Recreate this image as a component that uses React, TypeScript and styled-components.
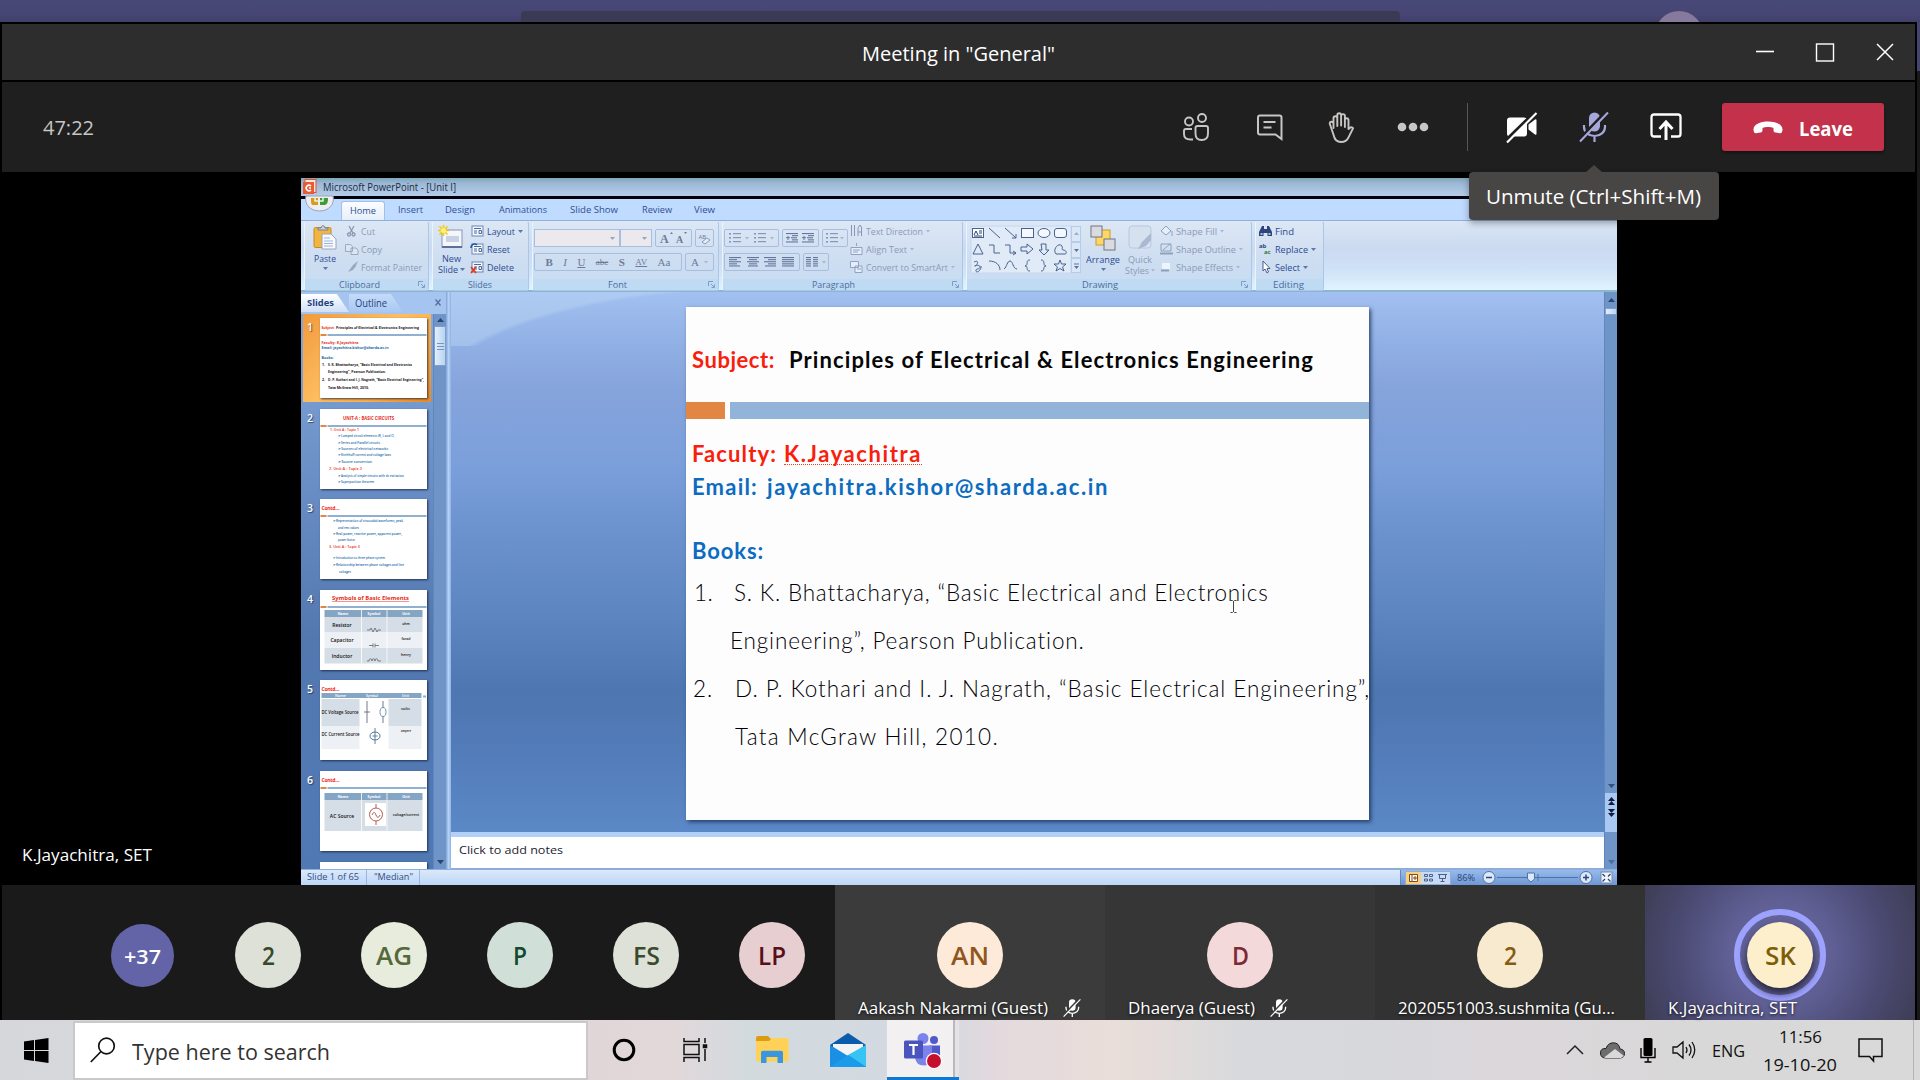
import React, { useLayoutEffect, useRef, useState } from "react";
import styled, { createGlobalStyle, css } from "styled-components";

const UI = `"Open Sans", "Noto Sans", sans-serif`;
const SLIDE = `Lato, "Open Sans", sans-serif`;

const Global = createGlobalStyle`
  * { box-sizing: border-box; }
  html, body { margin: 0; padding: 0; background: #000; overflow: hidden; }
  body { font-family: ${UI}; }
  svg { display: block; flex: none; overflow: visible; }
`;

/* ---------- text that keeps to a set width ---------- */

const FitBox = styled.span<{ $w: number; $ml?: number }>`
  display: block;
  flex: none;
  width: ${(p) => p.$w}px;
  margin-left: ${(p) => p.$ml || 0}px;
  white-space: nowrap;
`;
const FitInner = styled.span<{ $size: number; $color?: string; $weight?: number; $slide?: boolean; $shadow?: boolean }>`
  display: block;
  width: max-content;
  transform-origin: left center;
  white-space: pre;
  font-family: ${(p) => (p.$slide ? SLIDE : UI)};
  font-size: ${(p) => p.$size}px;
  font-weight: ${(p) => p.$weight || 400};
  color: ${(p) => p.$color || "inherit"};
  ${(p) => p.$shadow && css`text-shadow: 0 1px 3px rgba(0, 0, 0, 0.8);`}
`;

type FitProps = {
  w: number;
  size: number;
  color?: string;
  weight?: number;
  ml?: number;
  slide?: boolean;
  shadow?: boolean;
  children: string;
};

function Fit({ w, size, color, weight, ml, slide, shadow, children }: FitProps) {
  const ref = useRef<HTMLSpanElement>(null);
  const [style, setStyle] = useState<React.CSSProperties>({});
  useLayoutEffect(() => {
    const natural = ref.current!.getBoundingClientRect().width;
    setStyle(
      slide
        ? { letterSpacing: `${(w - natural) / children.length}px` }
        : { transform: `scaleX(${w / natural})` }
    );
  }, []);
  return (
    <FitBox $w={w} $ml={ml}>
      <FitInner ref={ref} $size={size} $color={color} $weight={weight} $slide={slide} $shadow={shadow} style={style}>
        {children}
      </FitInner>
    </FitBox>
  );
}

/* ---------- desktop and window frame ---------- */

const Desktop = styled.div`
  width: 1920px;
  height: 1080px;
  overflow: hidden;
  background: #1b1b1b;
  display: flex;
  flex-direction: column;
`;
const BackApp = styled.div`
  height: 22px;
  flex: none;
  display: flex;
  padding: 11px 0 0 521px;
  overflow: hidden;
  background: linear-gradient(#484878 0, #464573 70%, #3f3f68 100%);
`;
const BackSearch = styled.div`
  width: 879px;
  height: 30px;
  border-radius: 4px;
  background: #3a3a55;
`;
const BackAvatar = styled.div`
  width: 48px;
  height: 48px;
  margin-left: 255px;
  border-radius: 50%;
  background: #85799c;
`;
const Middle = styled.div`
  display: flex;
  height: 998px;
  flex: none;
`;
const MeetingWindow = styled.div`
  width: 1917px;
  height: 998px;
  padding: 2px 2px 0;
  background: #000;
  display: flex;
  flex-direction: column;
`;
const Edge = styled.div`
  width: 3px;
  background: linear-gradient(#444470 0 49px, #191919 49px);
`;
const TitleBar = styled.div`
  height: 56px;
  flex: none;
  background: #2d2d2d;
  display: flex;
  align-items: center;
  padding-left: 860px;
  line-height: 56px;
  & > span { padding-top: 3px; }
`;
const WindowButtons = styled.div`
  display: flex;
  align-items: center;
  gap: 42px;
  margin-left: 701px;
`;
const Toolbar = styled.div`
  height: 90px;
  flex: none;
  margin-top: 2px;
  background: #1f1f1f;
  display: flex;
  align-items: center;
  padding-left: 41px;
  line-height: 40px;
  & > span { padding-top: 2px; }
`;
const ToolIcons = styled.div`
  display: flex;
  align-items: center;
  margin-left: 1086px;
`;
const ToolButton = styled.div<{ $w: number }>`
  width: ${(p) => p.$w}px;
  height: 48px;
  flex: none;
  display: flex;
  align-items: center;
  justify-content: center;
  position: relative;
`;
const Divider = styled.div`
  width: 1px;
  height: 48px;
  margin: 0 38px 0 -5px;
  background: #555;
`;
const Leave = styled.div`
  width: 162px;
  height: 48px;
  margin-left: 40px;
  border-radius: 3px;
  background: #c4314b;
  color: #fff;
  display: flex;
  align-items: center;
  padding-left: 31px;
  box-shadow: 0 2px 3px rgba(0, 0, 0, 0.4);
  & > span { padding-top: 3px; }
`;
const Tooltip = styled.div`
  position: absolute;
  z-index: 5;
  left: -69px;
  top: 69px;
  width: 250px;
  height: 48px;
  padding-left: 17px;
  border-radius: 4px;
  background: #484644;
  color: #fff;
  line-height: 49px;
  box-shadow: 0 3px 7px rgba(0, 0, 0, 0.35);
  &::before {
    content: "";
    position: absolute;
    left: 117px;
    top: -7px;
    border: 8px solid transparent;
    border-top: 0;
    border-bottom: 7px solid #484644;
  }
`;
const Stage = styled.div`
  height: 713px;
  flex: none;
  display: flex;
  background: #000;
`;
const PresenterArea = styled.div`
  width: 299px;
  display: flex;
  align-items: flex-end;
  padding: 0 0 15px 20px;
  color: #fff;
  line-height: 30px;
`;

/* ---------- shared PowerPoint window ---------- */

const Ppt = styled.div`
  width: 1316px;
  height: 713px;
  padding-top: 6px;
  display: flex;
  flex-direction: column;
`;
const PptTitle = styled.div`
  height: 18px;
  flex: none;
  display: flex;
  align-items: center;
  gap: 5px;
  padding-left: 1px;
  line-height: 17px;
  background: linear-gradient(#7fa6bb 0, #9db9d5 30%, #b5cdea 100%);
`;
const TabsRow = styled.div`
  height: 24px;
  flex: none;
  display: flex;
  border-top: 3px solid #00000c;
  background: #bfdbff;
  color: #2d4f94;
  line-height: 22px;
`;
const OfficeOrb = styled.div`
  width: 40px;
  padding-left: 3px;
  margin-top: -3px;
`;
const Tab = styled.div<{ $w: number; $active?: boolean }>`
  width: ${(p) => p.$w}px;
  display: flex;
  justify-content: center;
  ${(p) =>
    p.$active &&
    css`
      margin-top: 2px;
      line-height: 17px;
      border: 1px solid #9fc0e8;
      border-bottom: 0;
      border-radius: 3px 3px 0 0;
      background: linear-gradient(#fbfdff, #e6effa);
    `}
`;
const Ribbon = styled.div`
  height: 72px;
  flex: none;
  display: flex;
  padding: 0 3px;
  gap: 3px;
  border-top: 1px solid #93afd8;
  border-bottom: 2px solid #8db5d0;
  background: linear-gradient(#dbe7f6 0, #cbdaf0 40%, #cfe2f7 70%, #e0f3ff 100%);
`;
const Group = styled.div<{ $w: number }>`
  width: ${(p) => p.$w}px;
  height: 70px;
  flex: none;
  display: flex;
  flex-direction: column;
  border: 1px solid #aac7e8;
  border-top-color: #dbe8f6;
  border-left-color: #eaf4fd;
  border-radius: 3px;
  background: linear-gradient(#dce7f5 0, #cfdef1 50%, #c8dcf2 100%);
`;
const GroupBody = styled.div`
  height: 57px;
  flex: none;
  display: flex;
`;
const GroupLabel = styled.div<{ $pl: number }>`
  height: 11px;
  display: flex;
  align-items: center;
  padding-left: ${(p) => p.$pl}px;
  background: #bfdaf3;
  color: #4d6b9f;
  line-height: 12px;
`;
const LauncherSlot = styled.div`
  flex: 1;
  display: flex;
  justify-content: flex-end;
  padding-right: 3px;
`;
const BigButton = styled.div<{ $w: number; $ml?: number; $color?: string }>`
  width: ${(p) => p.$w}px;
  margin-left: ${(p) => p.$ml || 0}px;
  flex: none;
  display: flex;
  flex-direction: column;
  align-items: center;
  padding-top: 3px;
  color: ${(p) => p.$color || "#2d4a91"};
  line-height: 11px;
  & > svg:first-child { margin-bottom: 3px; }
`;
const CaretDrop = styled.div`
  padding-top: 3px;
`;
const Stack = styled.div<{ $ml?: number }>`
  margin-left: ${(p) => p.$ml || 0}px;
  display: flex;
  flex-direction: column;
`;
const SmallRow = styled.div<{ $dim?: boolean }>`
  height: 18px;
  display: flex;
  align-items: center;
  gap: 3px;
  color: ${(p) => (p.$dim ? "#8c9ab4" : "#2d4a91")};
  line-height: 19px;
`;
const IconSlot = styled.span`
  width: 13px;
  display: flex;
  justify-content: flex-start;
`;
const Line = styled.div`
  display: flex;
  align-items: center;
  gap: 2px;
`;
const Fields = styled.div`
  display: flex;
`;
const ToolRow = styled.div`
  height: 18px;
  display: flex;
  gap: 3px;
  margin-top: 7px;
  & + & { margin-top: 6px; }
`;
const Cluster = styled.div<{ $w: number; $field?: boolean }>`
  width: ${(p) => p.$w}px;
  height: 18px;
  flex: none;
  display: flex;
  align-items: center;
  justify-content: ${(p) => (p.$field ? "flex-end" : "space-evenly")};
  padding-right: ${(p) => (p.$field ? 4 : 0)}px;
  border: 1px solid #a6bfe0;
  border-radius: ${(p) => (p.$field ? 0 : 2)}px;
  background: ${(p) => (p.$field ? "#ece9ee" : "transparent")};
  color: #6c7b98;
`;
const Glyph = styled.span<{ $size: number; $kind?: string }>`
  font-family: "Liberation Serif", serif;
  font-size: ${(p) => p.$size}px;
  line-height: 14px;
  font-weight: ${(p) => (p.$kind === "bold" ? 700 : 400)};
  font-style: ${(p) => (p.$kind === "italic" ? "italic" : "normal")};
  text-decoration: ${(p) => (p.$kind === "under" ? "underline" : p.$kind === "strike" ? "line-through" : "none")};
`;
const GalleryPad = styled.div`
  padding-top: 4px;
`;
const PptBody = styled.div`
  flex: 1;
  min-height: 0;
  display: flex;
  background: #5d86bf;
`;
const SidePane = styled.div`
  width: 145px;
  display: flex;
  flex-direction: column;
  overflow: hidden;
  background: linear-gradient(#86aee4 0, #7399cf 20%, #5378b0 60%, #5079b4 100%);
`;
const PaneTabs = styled.div`
  height: 22px;
  flex: none;
  padding-top: 2px;
  display: flex;
  background: #a5c4f0;
`;
const PaneTab = styled.div<{ $w: number; $active?: boolean }>`
  width: ${(p) => p.$w}px;
  height: 18px;
  padding-left: 6px;
  line-height: 18px;
  color: #26427e;
  background: ${(p) => (p.$active ? "linear-gradient(#fff, #cfe0f7)" : "linear-gradient(#c5dbf8, #a9c8f2)")};
  clip-path: polygon(0 0, calc(100% - 12px) 0, 100% 100%, 0 100%);
`;
const PaneClose = styled.div`
  margin-left: auto;
  padding: 5px 5px 0 0;
`;
const PaneContent = styled.div`
  display: flex;
  flex: 1;
  min-height: 0;
`;
const ThumbList = styled.div`
  width: 132px;
  overflow: hidden;
  display: flex;
  flex-direction: column;
  gap: 2.6px;
  padding-left: 2px;
`;
const ThumbRow = styled.div<{ $selected?: boolean }>`
  width: 128px;
  height: 88px;
  flex: none;
  display: flex;
  padding: 4px 0 0 4px;
  color: #fff;
  background: ${(p) => (p.$selected ? "linear-gradient(135deg, #f19a3c 0, #fdbd60 45%, #fbb04c 70%, #ec8a22 100%)" : "transparent")};
`;
const ThumbNumber = styled.div`
  width: 13px;
  flex: none;
  font-size: 10.5px;
  font-weight: 600;
  line-height: 18px;
  text-shadow: 1px 1px 1px rgba(40, 40, 60, 0.7);
`;
const Thumb = styled.div`
  width: 107px;
  height: 80px;
  background: #fff;
  box-shadow: 1px 1px 2px rgba(20, 30, 60, 0.8);
`;
const Scrollbar = styled.div<{ $w: number }>`
  width: ${(p) => p.$w}px;
  flex: none;
  display: flex;
  flex-direction: column;
  align-items: center;
  background: #6f95c8;
  border-left: 1px solid #5f86bd;
`;
const ScrollThumb = styled.div<{ $h: number }>`
  width: 100%;
  height: ${(p) => p.$h}px;
  display: flex;
  flex-direction: column;
  align-items: center;
  justify-content: center;
  gap: 2px;
  border: 1px solid #7f9fca;
  background: linear-gradient(90deg, #e2effc, #b9d3f1);
`;
const Grip = styled.i`
  display: block;
  width: 7px;
  height: 1px;
  background: #7894bd;
`;
const ScrollEnd = styled.div<{ $h: number }>`
  height: ${(p) => p.$h}px;
  width: 100%;
  display: flex;
  align-items: center;
  justify-content: center;
`;
const PageJump = styled.div`
  width: 100%;
  height: 39px;
  display: flex;
  flex-direction: column;
  align-items: center;
  justify-content: flex-start;
  padding-top: 4px;
  gap: 4px;
  background: #a9c8f3;
`;
const Spacer = styled.div`
  flex: 1;
`;
const Splitter = styled.div`
  width: 5px;
  background: linear-gradient(90deg, #7fa3d6, #b5d2f6 50%, #8fb3e6);
`;
const Work = styled.div`
  flex: 1;
  display: flex;
  flex-direction: column;
`;
const WorkTop = styled.div`
  display: flex;
  height: 540px;
`;
const Canvas = styled.div`
  height: 540px;
  display: flex;
  background:
    radial-gradient(ellipse 330px 120px at 300px 115px, transparent 97%, rgba(190, 217, 245, 0.42) 100%) 0 0 / 228px 54px no-repeat,
    linear-gradient(#a2c0f0 0, #90afe4 10%, #86a4dc 18%, #7b9fda 32%, #6b92cd 45%, #5d85bf 60%, #4e77b1 74%, #5079b5 80%, #5b88c6 100%);
`;
const SlidePage = styled.div`
  width: 683px;
  height: 513px;
  margin: 15px 235px 0 235px;
  flex: none;
  padding-top: 36.5px;
  background: #fdfdfe;
  box-shadow: 2px 2px 4px rgba(20, 40, 80, 0.75);
  overflow: hidden;
`;
const SlideLine = styled.div<{ $top?: number; $h?: number; $pl: number }>`
  display: flex;
  height: ${(p) => p.$h || 32}px;
  line-height: ${(p) => p.$h || 32}px;
  margin-top: ${(p) => p.$top || 0}px;
  padding-left: ${(p) => p.$pl}px;
`;
const Bars = styled.div`
  display: flex;
  gap: 5px;
  height: 17px;
  margin-top: 26.5px;
`;
const OrangeBar = styled.div`
  width: 39px;
  background: #e28743;
`;
const BlueBar = styled.div`
  flex: 1;
  background: #92b4d8;
`;
const Misspelt = styled.span`
  height: 27px;
  margin-left: 7px;
  border-bottom: 1px dotted #e8452f;
`;
const CursorAnchor = styled.div`
  position: relative;
  display: flex;
`;
const CursorPlace = styled.div`
  position: absolute;
  left: 517px;
  top: 31px;
`;
const NotesRow = styled.div`
  display: flex;
  height: 37px;
`;
const Notes = styled.div`
  height: 37px;
  flex: 1;
  display: flex;
  padding-left: 8px;
  border-top: 5px solid #b2d0f8;
  border-bottom: 1px solid #8fabd3;
  background: #fff;
  line-height: 26px;
  color: #1d2430;
`;
const Status = styled.div`
  height: 16px;
  flex: none;
  display: flex;
  line-height: 14px;
  color: #33507f;
  border-top: 1px solid #8eaede;
  background: linear-gradient(#dbe9fb, #bdd6f7);
`;
const StatusCell = styled.div<{ $w: number; $pl: number }>`
  width: ${(p) => p.$w}px;
  padding-left: ${(p) => p.$pl}px;
  border-right: 1px solid #97b6e2;
`;
const ViewTools = styled.div`
  width: 217px;
  margin-left: auto;
  display: flex;
  align-items: center;
  background: linear-gradient(#98bbed, #6f97d2);
  border-left: 1px solid #6186c0;
`;
const ViewButtons = styled.div`
  width: 46px;
  height: 14px;
  margin-left: 4px;
  display: flex;
  background: #c7dbf6;
  border: 1px solid #90aedb;
`;
const ViewButton = styled.div<{ $on?: boolean }>`
  flex: 1;
  display: flex;
  align-items: center;
  justify-content: center;
  background: ${(p) => (p.$on ? "#fcd07a" : "transparent")};
`;

/* ---------- participants ---------- */

const Participants = styled.div`
  height: 135px;
  flex: none;
  display: flex;
  background: #1b1a1a;
`;
const Overflow = styled.div`
  width: 833px;
  display: flex;
  align-items: center;
  gap: 60px;
  padding: 5px 0 0 107px;
`;
const Avatar = styled.div<{ $bg: string; $fg: string; $small?: boolean }>`
  width: ${(p) => (p.$small ? 63 : 66)}px;
  height: ${(p) => (p.$small ? 63 : 66)}px;
  margin: 0 ${(p) => (p.$small ? 1.5 : 0)}px;
  padding-top: ${(p) => (p.$small ? 3 : 0)}px;
  flex: none;
  border-radius: 50%;
  background: ${(p) => p.$bg};
  color: ${(p) => p.$fg};
  display: flex;
  align-items: center;
  justify-content: center;
`;
const Tile = styled.div<{ $bg: string }>`
  width: 270px;
  height: 135px;
  padding-top: 24px;
  background: ${(p) => p.$bg};
  display: flex;
  flex-direction: column;
  align-items: center;
`;
const Ring = styled.div<{ $on?: boolean }>`
  width: 92px;
  height: 92px;
  border-radius: 50%;
  flex: none;
  display: flex;
  align-items: center;
  justify-content: center;
  border: 6px solid ${(p) => (p.$on ? "#9ea2ff" : "transparent")};
  ${(p) => p.$on && css`
    ${Avatar} { box-shadow: 0 5px 8px #26243a; }
  `}
`;
const NameRow = styled.div`
  width: 270px;
  height: 19px;
  display: flex;
  align-items: center;
  padding-left: 23px;
  gap: 15px;
  margin-top: -3px;
  color: #fff;
  line-height: 19px;
  position: relative;
`;

/* ---------- taskbar ---------- */

const Taskbar = styled.div`
  height: 60px;
  flex: none;
  display: flex;
  align-items: center;
  color: #111;
  background: linear-gradient(90deg, #d6d7db 0, #d9dadd 20%, #e1d6d8 32%, #e2d8da 35%, #d2dade 39%, #d4d9e1 49%, #e4d9dd 52%, #e9ded9 58%, #d7d9dd 65%, #d8d8dc 74%, #dcd7db 78%, #d8d8d8 90%, #d9d9d9 100%);
`;
const StartButton = styled.div`
  width: 73px;
  padding-left: 24px;
`;
const SearchBox = styled.div`
  width: 515px;
  height: 59px;
  border: 2px solid #c9c9c9;
  background: #fff;
  display: flex;
  align-items: center;
  padding-left: 15px;
  color: #333;
  line-height: 50px;
  & > span { padding-top: 3px; }
`;
const AppSlot = styled.div<{ $w: number }>`
  width: ${(p) => p.$w}px;
  height: 60px;
  flex: none;
  display: flex;
  align-items: center;
  justify-content: center;
`;
const ActiveApp = styled.div`
  width: 72px;
  height: 60px;
  margin-left: 4px;
  padding-top: 6px;
  display: flex;
  align-items: center;
  justify-content: center;
  border-bottom: 3px solid #0f78d4;
  background: linear-gradient(90deg, #f2f0f1 0 66px, #b9b9bd 66px 68px, #e6e2e4 68px);
`;
const Tray = styled.div`
  margin-left: auto;
  display: flex;
  align-items: center;
  height: 60px;
  padding-right: 6px;
`;
const TrayPad = styled.span<{ $w: number }>`
  width: ${(p) => p.$w}px;
`;
const Clock = styled.div`
  width: 80px;
  margin-left: 15px;
  padding-top: 1px;
  display: flex;
  flex-direction: column;
  align-items: center;
  line-height: 28px;
`;
const DesktopPeek = styled.div`
  width: 1px;
  height: 60px;
  margin-left: 30px;
  background: #b5b5b5;
`;

/* ---------- drawings ---------- */

const Arrow = ({ c = "#5e76a8", w = 5 }: { c?: string; w?: number }) => (
  <svg width={w} height={w * 0.6} viewBox="0 0 5 3"><path d="M0 0h5L2.500 3z" fill={c} /></svg>
);
const Faint = () => <Arrow c="#a9b6cb" w={4} />;
const ArrowUp = () => (
  <svg width="7" height="4" viewBox="0 0 7 4"><path d="M0 4h7L3.500 0z" fill="#28456f" /></svg>
);
const Launcher = () => (
  <svg width="7" height="7" viewBox="0 0 7 7" fill="none" stroke="#7f9cc6" strokeWidth="1">
    <path d="M.5 5V.5H5M3 3l3 3M6.500 3.500v3h-3" />
  </svg>
);

const MicOff = ({ size = 30, c = "#a6a7dc", bg = "#1f1f1f" }) => (
  <svg width={size} height={size} viewBox="0 0 30 30" fill="none">
    <rect x="10" y="0.500" width="11" height="19" rx="5.500" fill={c} />
    <path d="M5 13v2c0 5 4.500 9 10.500 9S26 20 26 15v-2M15.500 24v6" stroke={c} strokeWidth="2.200" />
    <path d="M-1 28.500L27.500 -1" stroke={bg} strokeWidth="2.600" />
    <path d="M1 29.500L29 .5" stroke={c} strokeWidth="2" />
  </svg>
);

const LinesIcon = ({ kind }: { kind: string }) => {
  const rows: Record<string, number[][]> = {
    left: [[0, 12], [0, 8], [0, 12], [0, 8], [0, 11]],
    center: [[0, 12], [2, 8], [0, 12], [2, 8], [1, 10]],
    right: [[0, 12], [4, 8], [0, 12], [4, 8], [1, 11]],
    full: [[0, 12], [0, 12], [0, 12], [0, 12], [0, 12]],
    indent: [[0, 12], [6, 6], [5, 6], [6, 6], [0, 12]],
    columns: [[0, 5], [0, 5], [0, 5], [0, 5], [0, 5]],
  };
  return (
    <svg width="13" height="10" viewBox="0 0 13 10">
      {rows[kind].map(([x, w], i) => <rect key={i} x={x} y={i * 2.1} width={w} height="1.1" fill="#64779b" />)}
      {kind === "columns" && rows[kind].map((_, i) => <rect key={i} x={7} y={i * 2.1} width={5} height="1.1" fill="#64779b" />)}
      {kind === "indent" && <path d="M0 4.700h4M2 3v4" stroke="#64779b" />}
    </svg>
  );
};
const ListIcon = () => (
  <svg width="12" height="12" viewBox="0 0 12 12" fill="#8797b4">
    {[1, 5, 9].map((y) => <g key={y}><rect x="0" y={y} width="2" height="1.600" /><rect x="4" y={y} width="8" height="1.200" /></g>)}
  </svg>
);
const GrowA = ({ s, up }: { s: number; up: boolean }) => (
  <svg width={s} height="14" viewBox={`0 0 ${s} 14`}>
    <text x="0" y="12" fontSize={s - 1} fontFamily="Liberation Serif, serif" fontWeight="700" fill="#6c7b98">A</text>
    <path d={up ? `M${s - 3} 3l1.500-2 1.500 2z` : `M${s - 3} 1l1.500 2 1.500-2z`} fill="#6c7b98" />
  </svg>
);
const ClearFormat = () => (
  <svg width="13" height="13" viewBox="0 0 13 13">
    <text x="0.500" y="7" fontSize="6" fill="#6c7b98">AB</text>
    <path d="M4 10l5-4 3 2-5 4z" fill="#e6eef9" stroke="#8a9ab8" />
  </svg>
);

const ShapeGallery = () => (
  <svg width="110" height="48" viewBox="0 0 110 48" fill="none" stroke="#47628f" strokeWidth="1">
    <rect x="0" y="0" width="100" height="47" fill="#e1ebf8" stroke="#c5d7ef" />
    <rect x="1.500" y="2.500" width="11" height="9" fill="#fff" /><path d="M3 9l2-4 2 4M8 5h3M8 7h3M3 10h8" stroke="#26406f" />
    <path d="M18 2l11 10M34 2l11 10M45 8v4h-4" />
    <rect x="50.500" y="2.500" width="12" height="9" fill="#f4f9ff" /><ellipse cx="73" cy="7" rx="6" ry="4.500" fill="#f4f9ff" /><rect x="83.500" y="2.500" width="12" height="9" rx="2.500" fill="#f4f9ff" />
    <path d="M2 28l5-10 5 10zM18 19h5v8h6M34 19h5v8h6M42 25l3 2-3 2M50 21h6v-3l6 5-6 5v-3h-6zM70 18h5v6h3l-5 5-5-5h3zM85 28c-4-5 3-12 6-8 1 2-1 3 1 4 4 0 4 4 2 4z" />
    <path d="M3 36c6-3 3 4 1 4s5-2 5 1-5 1-4 4 6-2 5-5M18 35c7 0 11 4 11 9M33 43c3-2 3-8 6-8s3 8 7 8M59 34c-5 0-1 5-5 6 4 0 0 5 5 5M70 34c5 0 1 5 5 6-4 0 0 5-5 5M89 34l1.500 4h4.500l-3.500 3 1.500 4-4-2.500-4 2.500 1.500-4-3.500-3h4.500z" />
    <g stroke="#b6cceb" fill="#dbe7f6"><rect x="100.500" y="0.500" width="9" height="15" /><rect x="100.500" y="16.500" width="9" height="15" /><rect x="100.500" y="32.500" width="9" height="14" /></g>
    <g stroke="none" fill="#5a75a5"><path d="M103 9h5l-2.500-3z" opacity=".5" /><path d="M103 23h5l-2.500 3zM103 40h5l-2.500 3zM103 37.500h5v1h-5z" /></g>
  </svg>
);

const CutIcon = () => <svg width="14" height="12" viewBox="0 0 14 12" fill="none" stroke="#8b98b0" strokeWidth="1.300"><path d="M4 1l4 7M9 1L5 8" /><circle cx="4" cy="9.500" r="1.500" /><circle cx="8.500" cy="9.500" r="1.500" /></svg>;
const CopyIcon = () => <svg width="14" height="12" viewBox="0 0 14 12" fill="#dce5f1" stroke="#9aa9c2"><path d="M.5 1.500h5l2 2v5h-7zM6 5h5l2 2v4.500H6z" /></svg>;
const BrushIcon = () => <svg width="14" height="12" viewBox="0 0 14 12"><path d="M13 0L8 4l2 3zM8 4L3 11l5-2 2-3z" fill="#9aa7bd" /></svg>;
const LayoutIcon = ({ badge }: { badge?: string }) => (
  <svg width="13" height="12" viewBox="0 0 13 12">
    <rect x="1" y="1" width="11" height="10" fill="#f3f7fd" stroke="#6d85b3" />
    <path d="M3 3.500h7M3 6h3M3 8h3M8 5.500h2.500v3H8z" stroke="#4d6a9e" fill="none" />
    {badge === "reset" && <path d="M0 5c0-4 4-5 6-3" stroke="#2456a8" strokeWidth="1.600" fill="none" />}
    {badge === "delete" && <path d="M0 6l5 6M5 6l-5 6" stroke="#e03a1c" strokeWidth="1.800" />}
  </svg>
);

const PasteIcon = () => (
  <svg width="24" height="25" viewBox="0 0 24 25">
    <rect x="1" y="2.500" width="17" height="20" rx="1.500" fill="#f0b63f" stroke="#c48a29" />
    <path d="M5 5V3h3c0-3 4-3 4 0h3v2z" fill="#c9cfd8" stroke="#7b818c" />
    <path d="M9 9h9l5 5v10H9z" fill="#f7f9fd" stroke="#98a6bf" />
    <path d="M11 13h6M11 16h9M11 18.500h9M11 21h9" stroke="#9db4dc" />
  </svg>
);
const NewSlideIcon = () => (
  <svg width="26" height="25" viewBox="0 0 26 25">
    <rect x="4" y="5" width="20" height="17" fill="#f4f6fb" stroke="#8195b7" />
    <rect x="8" y="11" width="13" height="6" fill="#c7d2e4" /><path d="M4 22h20" stroke="#5d7196" strokeWidth="2" />
    <path d="M5.500 0v11M0 5.500h11M1.500 1.500l8 8M9.500 1.500l-8 8" stroke="#f5c800" strokeWidth="1.500" /><circle cx="5.500" cy="5.500" r="2.500" fill="#fff27a" />
  </svg>
);
const ArrangeIcon = () => (
  <svg width="27" height="26" viewBox="0 0 27 26">
    <rect x="6" y="5" width="14" height="15" fill="#ffd767" stroke="#c99a29" />
    <rect x="1" y="1" width="11" height="11" fill="#d9dbe0" stroke="#6e747f" /><rect x="14" y="14" width="11" height="11" fill="#d9dbe0" stroke="#6e747f" />
  </svg>
);
const QuickIcon = () => (
  <svg width="24" height="26" viewBox="0 0 24 26">
    <rect x="1" y="1" width="22" height="22" rx="3" fill="#d6e1f0" stroke="#b7c8df" /><path d="M23 8l-9 9-4 7 8-3 5-6z" fill="#aab9d0" />
  </svg>
);

function MiniBars() {
  return (
    <>
      <rect x="0.500" y="16" width="6" height="2" fill="#e28743" />
      <rect x="7.500" y="16" width="99" height="2" fill="#8fb0cf" />
    </>
  );
}
function MiniTitle({ title }: { title: string }) {
  return <text x="1.500" y="11" fontSize="5" fontWeight="700" fill="#ee2c1c" textLength="18">{title}</text>;
}
function MiniTable({ y, rows, h }: { y: number; rows: string[][]; h: number }) {
  return (
    <>
      <rect x="4.500" y={y} width="98" height="7" fill="#84a6c4" />
      <g fontSize="3.500" fontWeight="700" fill="#fff" textAnchor="middle">
        <text x="23" y={y + 4.5}>Name</text><text x="54" y={y + 4.5}>Symbol</text><text x="86" y={y + 4.5}>Unit</text>
      </g>
      {rows.map((r, i) => (
        <g key={i} fontSize="5" fontWeight="600" fill="#111" textAnchor="middle">
          <rect x="4.500" y={y + 7 + i * h} width="98" height={h} fill={i % 2 ? "#edf0f4" : "#d5dde6"} />
          <text x="22" y={y + 9 + i * h + h / 2}>{r[0]}</text>
          <text x="86" y={y + 7 + i * h + h / 2} fontSize="3.500">{r[1]}</text>
        </g>
      ))}
      <path d={`M41.500 ${y}v${7 + h * rows.length}M67 ${y}v${7 + h * rows.length}`} stroke="#fff" strokeWidth=".8" />
    </>
  );
}
const bullets = (items: [number, number, number, string, string][], size = 4, weight = 600) =>
  items.map(([x, y, w, c, t], i) => (
    <text key={i} x={x} y={y} fontSize={size} fontWeight={weight} fill={c} textLength={w} lengthAdjust="spacingAndGlyphs">{t}</text>
  ));
const B = "#1668a8";
const R = "#e62c20";
const K = "#151515";

const thumbs = [
  <>
    {bullets([[1.500, 11, 13, R, "Subject:"], [16, 11, 83, K, "Principles of Electrical & Electronics Engineering"], [1.500, 26, 37, R, "Faculty: K.Jayachitra"], [1.500, 31, 67, B, "Email: jayachitra.kishor@sharda.ac.in"], [1.500, 41, 12, B, "Books:"], [2, 47.500, 3, K, "1."], [8, 47.500, 84, K, "S. K. Bhattacharya, “Basic Electrical and Electronics"], [8, 55, 58, K, "Engineering”, Pearson Publication."], [2, 63, 3, K, "2."], [8, 63, 96, K, "D. P. Kothari and I. J. Nagrath, “Basic Electrical Engineering”,"], [8, 71, 41, K, "Tata McGraw Hill, 2010."]], 4.2, 700)}
    <MiniBars />
  </>,
  <>
    <text x="23" y="10.500" fontSize="5" fontWeight="700" fill={R} textLength="51" lengthAdjust="spacingAndGlyphs">UNIT-A : BASIC CIRCUITS</text>
    <MiniBars />
    {bullets([[10, 22, 29, R, "1.  Unit A : Topic 1"], [18, 28, 56, B, "➢ Lumped circuit elements (R, L and C)"], [18, 34.500, 42, B, "➢ Series and Parallel circuits"], [18, 41, 50, B, "➢ Sources of electrical networks"], [18, 47, 53, B, "➢ Kirchhoff current and voltage laws"], [18, 54, 34, B, "➢ Source conversion"], [9, 61, 33, R, "2.  Unit A : Topic 2"], [18, 67.500, 66, B, "➢ Analysis of simple circuits with dc excitation"], [18, 74, 36, B, "➢ Superposition theorem"]])}
  </>,
  <>
    <MiniTitle title="Contd…" />
    <MiniBars />
    {bullets([[13, 23, 70, B, "➢ Representation of sinusoidal waveforms, peak"], [18, 30, 21, B, "and rms values"], [13, 36, 69, B, "➢ Real power, reactive power, apparent power,"], [18, 42, 17, B, "power factor"], [9, 49, 31, R, "3.  Unit A : Topic 3"], [13, 60, 52, B, "➢ Introduction to three phase system"], [13, 67, 71, B, "➢ Relationship between phase voltages and line"], [19, 74, 12, B, "voltages"]])}
  </>,
  <>
    <text x="12" y="10" fontSize="5" fontWeight="700" fill={R} textDecoration="underline" textLength="77" lengthAdjust="spacingAndGlyphs">Symbols of Basic Elements</text>
    <MiniBars />
    <MiniTable y={20} h={15.5} rows={[["Resistor", "ohm"], ["Capacitor", "farad"], ["Inductor", "henry"]]} />
    <path d="M47 40h3l1-2 2 4 2-4 2 4 1-2h3M49 55.500h4M53 53.500v4M55 53.500v4M55 55.500h4M47 71h2c0-3 3-3 3 0 0-3 3-3 3 0 0-3 3-3 3 0h3" stroke="#555" strokeWidth=".7" fill="none" />
  </>,
  <>
    <MiniTitle title="Contd…" />
    <rect x="1.500" y="13" width="100" height="5" fill="#84a6c4" /><rect x="1.500" y="19" width="100" height="27" fill="#d5dde6" /><rect x="1.500" y="46" width="100" height="23" fill="#edf0f4" />
    <rect x="39.500" y="18" width="29" height="54" fill="#fff" />
    {bullets([[15, 17, 11, "#fff", "Name"], [46, 17, 12, "#fff", "Symbol"], [82, 17, 7, "#fff", "Unit"], [81, 30, 9, K, "volts"], [81, 52, 10, K, "ampere"]])}
    {bullets([[1.500, 34, 37, K, "DC Voltage Source"], [1.500, 56, 38, K, "DC Current Source"]], 5.2)}
    <path d="M47 21v22M44 32h6M63 21v22M55 48v16M52.500 56h5" stroke="#557" strokeWidth=".8" /><ellipse cx="63" cy="32" rx="3" ry="4.500" stroke="#57809a" fill="#fff" strokeWidth=".8" /><ellipse cx="55" cy="56" rx="5" ry="4" stroke="#3f7d9e" fill="none" />
    <rect x="103" y="15.500" width="3" height="2" fill="#8fb0cf" />
  </>,
  <>
    <MiniTitle title="Contd…" />
    <MiniBars />
    <MiniTable y={22} h={31} rows={[["AC Source", "voltage/current"]]} />
    <rect x="45" y="32" width="21" height="23" fill="#fff" /><circle cx="56" cy="43.500" r="6.500" fill="none" stroke="#b35a50" /><path d="M56 33v4M56 50v4M52 44c2-4 3-3 4 0s3 3 4 0" stroke="#b35a50" fill="none" />
  </>,
  <g />,
];

const CursorMark = () => (
  <CursorPlace><svg width="7" height="13" viewBox="0 0 7 13" fill="none" stroke="#444"><path d="M.5.5h2l1 1 1-1h2M3.500 1v11M.5 12.500h2l1-1 1 1h2" /></svg></CursorPlace>
);

/* ---------- sections ---------- */

const tabs: [string, number, number][] = [
  ["Insert", 51, 25], ["Design", 48, 30], ["Animations", 77, 48], ["Slide Show", 65, 48], ["Review", 61, 30], ["View", 35, 21],
];

function RibbonLabel({ text, w, pl, launcher }: { text: string; w: number; pl: number; launcher?: boolean }) {
  return (
    <GroupLabel $pl={pl}>
      <Fit w={w} size={9.5}>{text}</Fit>
      {launcher && <LauncherSlot><Launcher /></LauncherSlot>}
    </GroupLabel>
  );
}

function Command({ icon, text, w, dim, arrow }: { icon: React.ReactNode; text: string; w: number; dim?: boolean; arrow?: boolean }) {
  return (
    <SmallRow $dim={dim}>
      <IconSlot>{icon}</IconSlot>
      <Fit w={w} size={9.5}>{text}</Fit>
      {arrow && (dim ? <Faint /> : <Arrow />)}
    </SmallRow>
  );
}

function RibbonBar() {
  return (
    <Ribbon>
      <Group $w={125}>
        <GroupBody>
          <BigButton $w={22} $ml={9}><PasteIcon /><Fit w={22} size={9.5}>Paste</Fit><CaretDrop><Arrow /></CaretDrop></BigButton>
          <Stack $ml={9}>
            <Command dim icon={<CutIcon />} w={14} text="Cut" />
            <Command dim icon={<CopyIcon />} w={21} text="Copy" />
            <Command dim icon={<BrushIcon />} w={61} text="Format Painter" />
          </Stack>
        </GroupBody>
        <RibbonLabel text="Clipboard" w={41} pl={34} launcher />
      </Group>
      <Group $w={97}>
        <GroupBody>
          <BigButton $w={28} $ml={4}><NewSlideIcon /><Fit w={19} size={9.5}>New</Fit><Line><Fit w={20} size={9.5}>Slide</Fit><Arrow /></Line></BigButton>
          <Stack $ml={6}>
            <Command icon={<LayoutIcon />} w={28} text="Layout" arrow />
            <Command icon={<LayoutIcon badge="reset" />} w={23} text="Reset" />
            <Command icon={<LayoutIcon badge="delete" />} w={27} text="Delete" />
          </Stack>
        </GroupBody>
        <RibbonLabel text="Slides" w={24} pl={35} />
      </Group>
      <Group $w={187}>
        <GroupBody>
          <Stack $ml={1}>
            <ToolRow>
              <Fields><Cluster $w={86} $field><Arrow c="#98a6bd" /></Cluster><Cluster $w={32} $field><Arrow c="#98a6bd" /></Cluster></Fields>
              <Cluster $w={37}><GrowA s={13} up /><GrowA s={11} up={false} /></Cluster>
              <Cluster $w={19}><ClearFormat /></Cluster>
            </ToolRow>
            <ToolRow>
              <Cluster $w={148}>
                <Glyph $size={11} $kind="bold">B</Glyph><Glyph $size={11} $kind="italic">I</Glyph><Glyph $size={11} $kind="under">U</Glyph>
                <Glyph $size={9} $kind="strike">abc</Glyph><Glyph $size={11} $kind="bold">S</Glyph><Glyph $size={9} $kind="under">AV</Glyph><Glyph $size={11}>Aa</Glyph>
              </Cluster>
              <Cluster $w={29}><Glyph $size={11}>A</Glyph><Faint /></Cluster>
            </ToolRow>
          </Stack>
        </GroupBody>
        <RibbonLabel text="Font" w={19} pl={75} launcher />
      </Group>
      <Group $w={241}>
        <GroupBody>
          <Stack $ml={1}>
            <ToolRow>
              <Cluster $w={55}><ListIcon /><Faint /><ListIcon /><Faint /></Cluster>
              <Cluster $w={37}><LinesIcon kind="indent" /><LinesIcon kind="indent" /></Cluster>
              <Cluster $w={26}><ListIcon /><Faint /></Cluster>
            </ToolRow>
            <ToolRow>
              <Cluster $w={76}><LinesIcon kind="left" /><LinesIcon kind="center" /><LinesIcon kind="right" /><LinesIcon kind="full" /></Cluster>
              <Cluster $w={26}><LinesIcon kind="columns" /><Faint /></Cluster>
            </ToolRow>
          </Stack>
          <Stack $ml={2}>
            <Command dim arrow w={57} text="Text Direction" icon={<svg width="14" height="12" viewBox="0 0 14 12" stroke="#8796b2" fill="none"><path d="M1.500 0v11M4.500 0v11M8 11V3M11.500 11V3M8 3l2-3 2 3M8 7h4" /></svg>} />
            <Command dim arrow w={41} text="Align Text" icon={<svg width="14" height="12" viewBox="0 0 14 12" stroke="#8fa2c2" fill="#e6eef9"><path d="M1 4.500h11v7H1zM3 7h7M3 9h5M6.500 0v3" /></svg>} />
            <Command dim arrow w={82} text="Convert to SmartArt" icon={<svg width="14" height="12" viewBox="0 0 14 12" stroke="#8fa2c2" fill="#e6eef9"><path d="M.5.5h8v6h-8zM5 5h7v6.500H5zM7 8h4" /></svg>} />
          </Stack>
        </GroupBody>
        <RibbonLabel text="Paragraph" w={43} pl={89} launcher />
      </Group>
      <Group $w={286}>
        <GroupBody>
          <Stack $ml={4}><GalleryPad><ShapeGallery /></GalleryPad></Stack>
          <BigButton $w={34} $ml={5}><ArrangeIcon /><Fit w={34} size={9.5}>Arrange</Fit><CaretDrop><Arrow /></CaretDrop></BigButton>
          <BigButton $w={32} $ml={4} $color="#8d9ab3"><QuickIcon /><Fit w={24} size={9.5}>Quick</Fit><Line><Fit w={24} size={9.5}>Styles</Fit><Faint /></Line></BigButton>
          <Stack $ml={4}>
            <Command dim arrow w={41} text="Shape Fill" icon={<svg width="13" height="12" viewBox="0 0 13 12" stroke="#8fa0bd" fill="#e6eef9"><path d="M1 6l5-5 5 5-5 4zM12 6v5" /></svg>} />
            <Command dim arrow w={60} text="Shape Outline" icon={<svg width="13" height="12" viewBox="0 0 13 12" stroke="#8fa0bd" fill="none"><path d="M1 1h10v7H1zM3 7l7-6" /><path d="M0 10.500h13" strokeWidth="2" /></svg>} />
            <Command dim arrow w={57} text="Shape Effects" icon={<svg width="13" height="12" viewBox="0 0 13 12"><rect x="2" y="2" width="8" height="6" fill="#eef4fc" /><path d="M1 9.500h8" stroke="#8fa0bd" strokeWidth="2" /></svg>} />
          </Stack>
        </GroupBody>
        <RibbonLabel text="Drawing" w={36} pl={115} launcher />
      </Group>
      <Group $w={69}>
        <GroupBody>
          <Stack $ml={3}>
            <Command w={19} text="Find" icon={<svg width="14" height="12" viewBox="0 0 14 12" fill="#2c467c"><path d="M3 1h2v3h3V1h2l1 2 2 4v4H8.500V8h-4v3H0V7l2-4z" /><path d="M1.500 8h2v2h-2zM9.500 8h2v2h-2z" fill="#a9c1e6" /></svg>} />
            <Command w={33} text="Replace" arrow icon={<svg width="14" height="12" viewBox="0 0 14 12"><text x="0" y="5" fontSize="6" fontWeight="700" fill="#2c467c">ab</text><text x="5" y="11" fontSize="6" fontWeight="700" fill="#2f7a3c">ac</text></svg>} />
            <Command w={25} text="Select" arrow icon={<svg width="14" height="12" viewBox="0 0 14 12"><path d="M4 0v10l2-2 2 4 1.500-1L8 7.500h3z" fill="#fff" stroke="#4a5f88" /></svg>} />
          </Stack>
        </GroupBody>
        <RibbonLabel text="Editing" w={31} pl={17} />
      </Group>
    </Ribbon>
  );
}

function Slide() {
  const red = "#f8200c";
  const blue = "#0b6cc0";
  const ink = "#000004";
  return (
    <SlidePage>
      <SlideLine $pl={6}>
        <Fit slide w={83} size={22} weight={700} color={red}>Subject:</Fit>
        <Fit slide w={525} size={22} weight={700} color="#060606" ml={14}>Principles of Electrical &amp; Electronics Engineering</Fit>
      </SlideLine>
      <Bars><OrangeBar /><BlueBar /></Bars>
      <SlideLine $pl={6} $top={19}>
        <Fit slide w={85} size={22} weight={700} color={red}>Faculty:</Fit>
        <Misspelt><Fit slide w={138} size={22} weight={700} color={red}>K.Jayachitra</Fit></Misspelt>
      </SlideLine>
      <SlideLine $pl={6} $top={1}>
        <Fit slide w={66} size={22} weight={700} color={blue}>Email:</Fit>
        <Fit slide w={342} size={22} weight={700} color={blue} ml={9}>jayachitra.kishor@sharda.ac.in</Fit>
      </SlideLine>
      <SlideLine $pl={6} $top={32}>
        <Fit slide w={72} size={22} weight={700} color={blue}>Books:</Fit>
      </SlideLine>
      <SlideLine $pl={8} $h={48} $top={2}>
        <Fit slide w={19} size={22.5} weight={300} color={ink}>1.</Fit>
        <CursorAnchor>
          <Fit slide w={534} size={22.5} weight={300} color={ink} ml={21}>S. K. Bhattacharya, “Basic Electrical and Electronics</Fit>
          <CursorMark />
        </CursorAnchor>
      </SlideLine>
      <SlideLine $pl={44} $h={48}>
        <Fit slide w={355} size={22.5} weight={300} color={ink}>Engineering”, Pearson Publication.</Fit>
      </SlideLine>
      <SlideLine $pl={7} $h={48}>
        <Fit slide w={20} size={22.5} weight={300} color={ink}>2.</Fit>
        <Fit slide w={635} size={22.5} weight={300} color={ink} ml={22}>D. P. Kothari and I. J. Nagrath, “Basic Electrical Engineering”,</Fit>
      </SlideLine>
      <SlideLine $pl={49} $h={48}>
        <Fit slide w={264} size={22.5} weight={300} color={ink}>Tata McGraw Hill, 2010.</Fit>
      </SlideLine>
    </SlidePage>
  );
}

function PowerPoint() {
  return (
    <Ppt>
      <PptTitle>
        <svg width="15" height="16" viewBox="0 0 15 16"><rect x="3" y="0.500" width="11" height="13" fill="#fbe4dc" stroke="#d9532f" /><rect x="1" y="3" width="11" height="12" fill="#ea5a32" /><path d="M9 7a2.800 2.800 0 1 0 0 4M9 9H7" stroke="#fff" strokeWidth="1.600" fill="none" /></svg>
        <Fit w={133} size={10.5} color="#1c2a44" ml={1}>Microsoft PowerPoint - [Unit I]</Fit>
      </PptTitle>
      <TabsRow>
        <OfficeOrb>
          <svg width="31" height="16" viewBox="0 0 31 16"><path d="M2 0h27c2 8-4 15-13.500 15S0 8 2 0z" fill="#eceef1" stroke="#9aa4b5" /><path d="M7 2h7v7H9C7 9 7 7 7 2z" fill="#d99a1d" /><path d="M16 2h8c0 5-1 6-3 7h-5z" fill="#3f9a3a" /><path d="M11 1v4h8V1M15 5v6" stroke="#e9f3e4" strokeWidth="1.500" fill="none" /></svg>
        </OfficeOrb>
        <Tab $w={44} $active><Fit w={26} size={9.5}>Home</Fit></Tab>
        {tabs.map(([t, w, tw]) => <Tab key={t} $w={w}><Fit w={tw} size={9.5}>{t}</Fit></Tab>)}
      </TabsRow>
      <RibbonBar />
      <PptBody>
        <SidePane>
          <PaneTabs>
            <PaneTab $w={48} $active><Fit w={27} size={9.5} weight={700}>Slides</Fit></PaneTab>
            <PaneTab $w={54}><Fit w={32} size={10}>Outline</Fit></PaneTab>
            <PaneClose><svg width="6" height="7" viewBox="0 0 6 7" stroke="#587099" strokeWidth="1.300"><path d="M.5.500l5 6M5.500.500l-5 6" /></svg></PaneClose>
          </PaneTabs>
          <PaneContent>
            <ThumbList>
              {thumbs.map((art, i) => (
                <ThumbRow key={i} $selected={i === 0}>
                  <ThumbNumber>{i < 6 ? i + 1 : ""}</ThumbNumber>
                  <Thumb><svg width="107" height="80" viewBox="0 0 107 80">{art}</svg></Thumb>
                </ThumbRow>
              ))}
            </ThumbList>
            <Scrollbar $w={13}>
              <ScrollEnd $h={12}><ArrowUp /></ScrollEnd>
              <ScrollThumb $h={40}><Grip /><Grip /><Grip /></ScrollThumb>
              <Spacer />
              <ScrollEnd $h={14}><Arrow c="#28456f" w={7} /></ScrollEnd>
            </Scrollbar>
          </PaneContent>
        </SidePane>
        <Splitter />
        <Work>
          <WorkTop>
            <Canvas><Slide /></Canvas>
            <Scrollbar $w={13}>
              <ScrollEnd $h={16}><ArrowUp /></ScrollEnd>
              <ScrollThumb $h={7} />
              <Spacer />
              <ScrollEnd $h={14}><Arrow c="#34517f" w={7} /></ScrollEnd>
              <PageJump>
                <svg width="7" height="8" viewBox="0 0 7 8"><path d="M0 4h7L3.500 0zM0 8h7L3.500 4z" fill="#111c38" /></svg>
                <svg width="7" height="8" viewBox="0 0 7 8"><path d="M0 0h7L3.500 4zM0 4h7L3.500 8z" fill="#111c38" /></svg>
              </PageJump>
            </Scrollbar>
          </WorkTop>
          <NotesRow>
            <Notes><Fit w={104} size={11.5}>Click to add notes</Fit></Notes>
            <Scrollbar $w={13}><Spacer /><ScrollEnd $h={14}><Arrow c="#4d6b9c" w={7} /></ScrollEnd></Scrollbar>
          </NotesRow>
        </Work>
      </PptBody>
      <Status>
        <StatusCell $w={66} $pl={6}><Fit w={52} size={9.5}>Slide 1 of 65</Fit></StatusCell>
        <StatusCell $w={53} $pl={7}><Fit w={39} size={9.5}>"Median"</Fit></StatusCell>
        <ViewTools>
          <ViewButtons>
            <ViewButton $on><svg width="9" height="8" viewBox="0 0 9 8" fill="#fff" stroke="#7c4a1c"><path d="M.5.500h8v7h-8zM3 1v6M5 3h2v2H5z" /></svg></ViewButton>
            <ViewButton><svg width="9" height="8" viewBox="0 0 9 8" fill="none" stroke="#4a5f87"><path d="M.5.500h3v2h-3zM5.500.500h3v2h-3zM.5 5h3v2h-3zM5.500 5h3v2h-3z" /></svg></ViewButton>
            <ViewButton><svg width="9" height="8" viewBox="0 0 9 8" fill="none" stroke="#4a5f87"><path d="M0 .5h9M1.500 1v3.500h6V1M4.500 5v3M2.500 7.500h4" /></svg></ViewButton>
          </ViewButtons>
          <Fit w={18} size={9.5} ml={6} color="#2a4474">86%</Fit>
          <svg width="135" height="15" viewBox="0 0 135 15">
            <circle cx="14" cy="7.500" r="6" fill="#dce9fa" stroke="#5471a3" /><path d="M11 7.500h6" stroke="#2c4677" strokeWidth="1.500" />
            <path d="M22 7.500h81M63 4v7" stroke="#4c70a9" /><path d="M52.500 3h7v6l-3.500 3-3.500-3z" fill="#dce9fa" stroke="#5471a3" />
            <circle cx="111" cy="7.500" r="6" fill="#dce9fa" stroke="#5471a3" /><path d="M108 7.500h6M111 4.500v6" stroke="#2c4677" strokeWidth="1.500" />
            <rect x="126" y="2" width="11" height="11" fill="#f1f5fb" stroke="#7489ae" /><path d="M127.500 4l2.500 2.500M135.500 4l-2.500 2.500M127.500 11.500l2.500-2.500M135.500 11.500l-2.500-2.500" stroke="#2c4677" strokeWidth="1.300" />
          </svg>
        </ViewTools>
      </Status>
    </Ppt>
  );
}

const small: [string, string, string, number][] = [
  ["2", "#dde1d8", "#36492b", 13], ["AG", "#e7ecdd", "#55683a", 36], ["P", "#d0e0d8", "#12492f", 14],
  ["FS", "#dde1d8", "#3a4a2b", 27], ["LP", "#e7cfd1", "#561018", 28],
];
const tiles: [string, string, string, number, string, number, boolean, string][] = [
  ["AN", "#fdead8", "#8f5720", 38, "Aakash Nakarmi (Guest)", 190, true, "#3b3b3b"],
  ["D", "#f4d9db", "#7d2a35", 17, "Dhaerya (Guest)", 127, true, "#363636"],
  ["2", "#f7eacf", "#865c12", 13, "2020551003.sushmita (Gu...", 217, false, "#323232"],
  ["SK", "#fdefcb", "#7d5e07", 31, "K.Jayachitra, SET", 129, false, "radial-gradient(circle at 50% 50%, #6a6ba3 0, #5f5f94 35%, #4a4971 70%, #3e3d54 100%)"],
];

export default function App() {
  return (
    <>
      <Global />
      <Desktop>
        <BackApp><BackSearch /><BackAvatar /></BackApp>
        <Middle>
          <MeetingWindow>
            <TitleBar>
              <Fit w={193} size={20} color="#fff">Meeting in "General"</Fit>
              <WindowButtons>
                <svg width="18" height="20" viewBox="0 0 18 20"><path d="M0 9.500h18" stroke="#fff" strokeWidth="1.600" /></svg>
                <svg width="18" height="19" viewBox="0 0 18 19"><rect x="0.500" y="1" width="17" height="17" fill="none" stroke="#fff" strokeWidth="1.400" /></svg>
                <svg width="18" height="18" viewBox="0 0 18 18" stroke="#fff" strokeWidth="1.500"><path d="M1 1l16 16M17 1L1 17" /></svg>
              </WindowButtons>
            </TitleBar>
            <Toolbar>
              <Fit w={51} size={20} color="#c8c6c4">47:22</Fit>
              <ToolIcons>
                <ToolButton $w={32}>
                  <svg width="26" height="28" viewBox="0 0 26 28" fill="none" stroke="#c8c6c4" strokeWidth="1.900">
                    <circle cx="6" cy="8.500" r="4" /><circle cx="19" cy="5" r="4" />
                    <path d="M9 16H2.800Q1 16 1 18v3c0 4 3 5.500 6.500 5.500H10M14.500 13h8.500q2 0 2 2v5.500c0 4-2.500 6.500-6.500 6.500S12.500 24.500 12.500 20.500V15q0-2 2-2z" />
                  </svg>
                </ToolButton>
                <ToolButton $w={116}>
                  <svg width="26" height="27" viewBox="0 0 26 27" fill="none" stroke="#c8c6c4" strokeWidth="2">
                    <path d="M3 1.500h19.500q2 0 2 2V25l-6-4.500H3q-2 0-2-2v-15q0-2 2-2zM6.500 8h12M6.500 13.500h8" />
                  </svg>
                </ToolButton>
                <ToolButton $w={26}>
                  <svg width="26" height="31" viewBox="0 0 26 31" fill="none" stroke="#c8c6c4" strokeWidth="1.900" strokeLinecap="round" strokeLinejoin="round">
                    <path d="M5.500 16V6.200a1.900 1.900 0 0 1 3.800 0V14M9.300 14V3.200a1.900 1.900 0 0 1 3.800 0V13.500M13.100 13.500V4a1.900 1.900 0 0 1 3.800 0V15M16.900 7.500a1.900 1.900 0 0 1 3.600 0V17l1.500-1.200c1-1 2.800-.2 3 .5l-4.500 9c-1.500 3.500-4 4.700-7.500 4.700-4.500 0-6.500-2.500-7.400-7L1.700 11.500a1.900 1.900 0 0 1 3.600-.7" />
                  </svg>
                </ToolButton>
                <ToolButton $w={118}>
                  <svg width="32" height="10" viewBox="0 0 32 10" fill="#c8c6c4"><circle cx="5" cy="5" r="4.300" /><circle cx="16" cy="5" r="4.300" /><circle cx="27" cy="5" r="4.300" /></svg>
                </ToolButton>
                <Divider />
                <ToolButton $w={32}>
                  <svg width="32" height="31" viewBox="0 0 32 31">
                    <path d="M4 5.500h14q3 0 3 3v13q0 3-3 3H4q-3 0-3-3v-13q0-3 3-3zM22.500 12.500l6.500-5q1.500-1 1.500 1v13q0 2-1.500 1l-6.500-5z" fill="#fff" />
                    <path d="M-1 29L29 0" stroke="#1f1f1f" strokeWidth="3" /><path d="M1 30.500L30.500 1" stroke="#fff" strokeWidth="2.200" />
                  </svg>
                </ToolButton>
                <ToolButton $w={112}>
                  <MicOff />
                  <Tooltip><Fit w={215} size={20}>Unmute (Ctrl+Shift+M)</Fit></Tooltip>
                </ToolButton>
                <ToolButton $w={32}>
                  <svg width="32" height="28" viewBox="0 0 32 28" fill="none" stroke="#fff" strokeWidth="2.300">
                    <path d="M11 23.500H4q-2.500 0-2.500-2.500V4Q1.500 1.500 4 1.500h24q2.500 0 2.500 2.500v17q0 2.500-2.500 2.500h-7" />
                    <path d="M16 27V10.500M9.500 16l6.500-7 6.500 7" strokeWidth="3" />
                  </svg>
                </ToolButton>
                <Leave>
                  <svg width="30" height="13" viewBox="0 0 30 13"><path d="M15 .5C22 .5 29.500 3 29.500 8.500c0 2.500-1 4-2.500 3.800l-4.500-.8c-1.500-.3-2-1-2-2.500V7c-3-1.200-8-1.200-11 0v2c0 1.500-.5 2.200-2 2.500l-4.500.8C1.500 12.500.5 11 .5 8.500.5 3 8 .5 15 .5z" fill="#fff" /></svg>
                  <Fit w={54} size={19} weight={700} ml={16}>Leave</Fit>
                </Leave>
              </ToolIcons>
            </Toolbar>
            <Stage>
              <PresenterArea><Fit w={130} size={16.5}>K.Jayachitra, SET</Fit></PresenterArea>
              <PowerPoint />
            </Stage>
            <Participants>
              <Overflow>
                <Avatar $bg="#6264a7" $fg="#fff" $small><Fit w={37} size={19} weight={600}>+37</Fit></Avatar>
                {small.map(([t, bg, fg, w]) => (
                  <Avatar key={t} $bg={bg} $fg={fg}><Fit w={w} size={25} weight={600}>{t}</Fit></Avatar>
                ))}
              </Overflow>
              {tiles.map(([t, bg, fg, w, name, nw, muted, tile]) => (
                <Tile key={name} $bg={tile}>
                  <Ring $on={t === "SK"}><Avatar $bg={bg} $fg={fg}><Fit w={w} size={25} weight={600}>{t}</Fit></Avatar></Ring>
                  <NameRow>
                    <Fit w={nw} size={16.5} shadow>{name}</Fit>
                    {muted && <MicOff size={18} c="#fff" bg="#3b3b3b" />}
                  </NameRow>
                </Tile>
              ))}
            </Participants>
          </MeetingWindow>
          <Edge />
        </Middle>
        <Taskbar>
          <StartButton>
            <svg width="25" height="25" viewBox="0 0 25 25" fill="#000"><path d="M0 3.500L10 2v10H0zM11 1.900L24.500 0v12H11zM0 13h10v10L0 21.500zM11 13h13.500v12L11 23z" /></svg>
          </StartButton>
          <SearchBox>
            <svg width="26" height="26" viewBox="0 0 26 26" fill="none" stroke="#111" strokeWidth="1.700"><circle cx="16.500" cy="9" r="7.800" /><path d="M11 14.500L.8 25" /></svg>
            <Fit w={198} size={21} ml={16}>Type here to search</Fit>
          </SearchBox>
          <AppSlot $w={72}><svg width="24" height="24" viewBox="0 0 24 24"><circle cx="12" cy="12" r="9.800" fill="none" stroke="#000" strokeWidth="3" /></svg></AppSlot>
          <AppSlot $w={70}>
            <svg width="24" height="24" viewBox="0 0 24 24" fill="none" stroke="#111" strokeWidth="1.500"><path d="M1 0v3.500h15V0M1 6.500h15v10H1zM1 24v-4.500h15V24M22 0v5M22 11v12" /><rect x="20.500" y="7" width="3" height="2.500" fill="#111" /></svg>
          </AppSlot>
          <AppSlot $w={84}>
            <svg width="34" height="28" viewBox="0 0 34 28"><path d="M1 2q0-2 2-2h10l3 3v5H1z" fill="#dc9c10" /><path d="M1 5h13l3-3h14.500q2 0 2 2v20q0 1.500-2 1.500H3q-2 0-2-1.500z" fill="#ffd257" /><path d="M6 26V16.500q0-1.800 2-1.800h18q2 0 2 1.800V27h-5.500v-6h-11v6H6z" fill="#3a96dd" /></svg>
          </AppSlot>
          <AppSlot $w={67}>
            <svg width="38" height="34" viewBox="0 0 38 34"><path d="M1 12L19 0l18 12v6H1z" fill="#0a5cad" /><path d="M4 11h30v10L19 27 4 20z" fill="#f4f4f4" /><path d="M1 12l18 11L37 12v22H1z" fill="#1a8fe3" /><path d="M37 12v22L19 22z" fill="#35c4f4" /><path d="M1 34l18-12 18 12z" fill="#1b9bea" /></svg>
          </AppSlot>
          <TrayPad $w={2} />
          <ActiveApp>
            <svg width="38" height="37" viewBox="0 0 38 37">
              <circle cx="19" cy="5.500" r="5.500" fill="#7b83eb" /><circle cx="30" cy="7" r="4" fill="#5059c9" />
              <path d="M25 12.500h11v12q0 5-6 5h-5z" fill="#5059c9" /><path d="M11 12.500h17v12q0 8-8 8t-9-8z" fill="#7b83eb" />
              <rect x="0" y="7.500" width="19" height="18" rx="1.500" fill="#4b53bc" /><path d="M5 12h9M9.500 12v10" stroke="#fff" strokeWidth="2.200" />
              <circle cx="30" cy="28" r="8.300" fill="#fff" /><circle cx="30" cy="28" r="7" fill="#c50f2e" />
            </svg>
          </ActiveApp>
          <Tray>
            <svg width="18" height="10" viewBox="0 0 18 10" fill="none" stroke="#222" strokeWidth="1.500"><path d="M1 9l8-8 8 8" /></svg>
            <TrayPad $w={16} />
            <svg width="25" height="17" viewBox="0 0 25 17"><path d="M6 16q-5.500 0-5.500-5T6 6.500Q8 .8 13.500.8T20 7q4.500.5 4.500 4.500T20 16z" fill="#6d6d6d" stroke="#222" /><path d="M4 15.500L15 7l9 7-3 2H6z" fill="#d9d9d9" /></svg>
            <TrayPad $w={15} />
            <svg width="16" height="25" viewBox="0 0 16 25"><rect x="3.500" y="0" width="9" height="18" rx="1.500" fill="#000" /><path d="M1 10v9.500h14V10M8 20v4M4.500 24h7" stroke="#000" strokeWidth="1.400" fill="none" /></svg>
            <TrayPad $w={16} />
            <svg width="24" height="20" viewBox="0 0 24 20" fill="none" stroke="#111" strokeWidth="1.300"><path d="M1 7v6h4l6 5V2L5 7zM14 7q2 3 0 6M17 4.500q4 5.500 0 11M20 2q5.500 8 0 16" /></svg>
            <Fit w={33} size={17} ml={16}>ENG</Fit>
            <Clock><Fit w={43} size={17}>11:56</Fit><Fit w={74} size={17}>19-10-20</Fit></Clock>
            <TrayPad $w={18} />
            <svg width="25" height="25" viewBox="0 0 25 25" fill="none" stroke="#111" strokeWidth="1.500"><path d="M1 1h23v17.500h-8.500V23l-4-4.500H1z" /></svg>
            <DesktopPeek />
          </Tray>
        </Taskbar>
      </Desktop>
    </>
  );
}
